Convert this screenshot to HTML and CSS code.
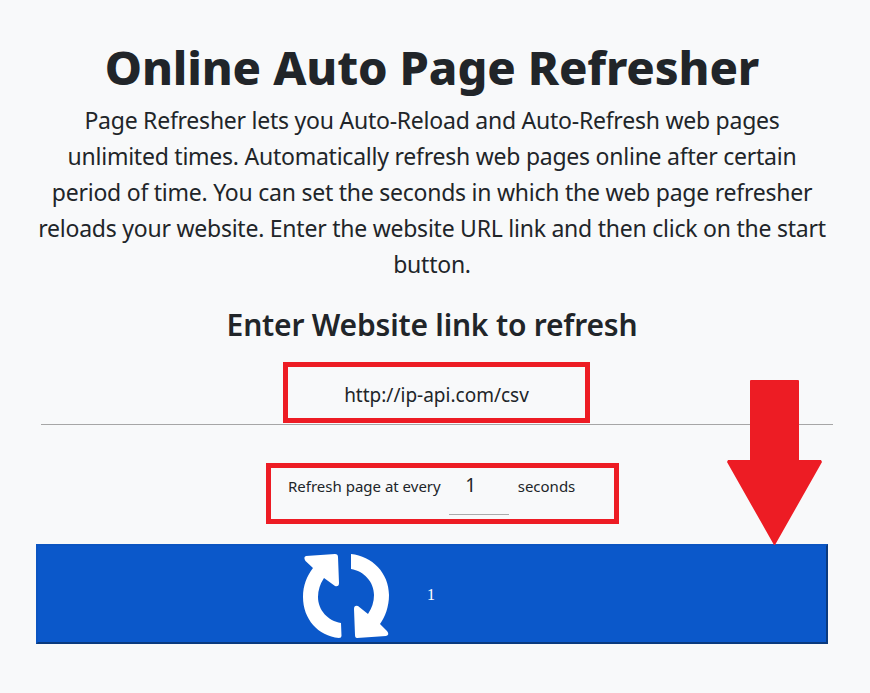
FILE: index.html
```html
<!DOCTYPE html>
<html lang="en">
<head>
    <meta charset="UTF-8">
    <meta name="viewport" content="width=device-width, initial-scale=1.0">
    <title>Online Auto Page Refresher</title>
    <link rel="stylesheet" href="styles.css">
</head>
<body>

    <div class="page">
        <h1>Online Auto Page Refresher</h1>
        <p class="intro">Page Refresher lets you Auto-Reload and Auto-Refresh web pages<br>unlimited times. Automatically refresh web pages online after certain<br>period of time. You can set the seconds in which the web page refresher<br>reloads your website. Enter the website URL link and then click on the start<br>button.</p>
        <h2>Enter Website link to refresh</h2>

        <div class="url-box">http://ip-api.com/csv</div>
        <hr class="divider">

        <div class="timer-box">
            <span class="timer-label">Refresh page at every</span>
            <span class="timer-input">1</span>
            <span class="timer-label">seconds</span>
        </div>

        <div class="start-bar">
            <svg class="refresh-icon" viewBox="23 18 87 87" aria-hidden="true">
                <path d="M26 21 L55 19 Q58 19 58 22 L59 48 Q59 52 55 51 L44 43 Q38 52 38 62 C38 75 48 86 61 88 L61.5 101 Q61.5 103 59 103 C38 101 23 84 23 62 C23 50 27 41 33 33 L25.5 26 Q23 22 26 21Z"/>
                <path d="M71 19 C92 21 109 38 109 60 C109 72 105 82 100 89 L107 96 Q110 100 106 101 L77 103 Q75 103 75 100 L74 74 Q74 70 78 71 L88 79 Q94 70 94 60 C94 47 84 36 71 34Z"/>
            </svg>
            <span class="start-count">1</span>
        </div>

        <svg class="arrow" viewBox="0 0 95 165" aria-hidden="true">
            <path d="M23 1 Q23 0 24 0 L71 0 Q72 0 72 1 L72 80 L94 80 L95 82 L48 165 L47 165 L0 82 L1 80 L23 80Z"/>
        </svg>
    </div>

</body>
</html>
```

FILE: styles.css
```css
body {
    font-family: "Noto Sans", "Open Sans", Arial, sans-serif;
    background: #f8f9fa;
    color: #212529;
    margin: 0;
}
.page {
    position: relative;
    width: 792px;
    height: 693px;
    margin-left: 36px;
    padding-top: 36px;
    box-sizing: border-box;
    display: flex;
    flex-direction: column;
    align-items: center;
}
h1 {
    font-size: 47px;
    line-height: 62px;
    letter-spacing: -0.12px;
    font-weight: 800;
    margin: 0;
}
.intro {
    font-size: 23px;
    line-height: 36px;
    letter-spacing: -0.24px;
    font-weight: 400;
    text-align: center;
    white-space: nowrap;
    margin: 4px 0 0;
}
h2 {
    font-size: 30px;
    line-height: 42px;
    letter-spacing: -0.2px;
    font-weight: 600;
    margin: 22px 0 0;
}
.url-box {
    width: 307px;
    height: 61px;
    margin-top: 16px;
    margin-left: 9px;
    padding-top: 4px;
    box-sizing: border-box;
    border: 5px solid #ed1c24;
    font-size: 19px;
    display: flex;
    align-items: center;
    justify-content: center;
}
.divider {
    align-self: flex-start;
    width: 792px;
    height: 1px;
    margin: 1px 0 0 5px;
    border: 0;
    background: #a6a6a6;
}
.timer-box {
    width: 353px;
    height: 61px;
    margin-top: 38px;
    margin-left: 21px;
    box-sizing: border-box;
    border: 5px solid #ed1c24;
    display: flex;
    align-items: flex-start;
    padding: 8px 0 0 17px;
}
.timer-label {
    font-size: 15px;
    line-height: 21px;
}
.timer-input {
    width: 60px;
    height: 43px;
    margin: -4px 9px 0 8px;
    padding-right: 16px;
    font-size: 19px;
    line-height: 26px;
    text-align: center;
    border-bottom: 1px solid #aaa;
    box-sizing: border-box;
}
.start-bar {
    width: 792px;
    height: 100px;
    margin-top: 20px;
    box-sizing: border-box;
    background: #0b58ca;
    border: 2px solid;
    border-color: #0b55c2 #0a3a7e #0a3a7e #0b55c2;
    display: flex;
    align-items: center;
    padding-left: 265px;
}
.refresh-icon {
    width: 87px;
    height: 87px;
    margin-top: 4px;
    fill: #fff;
    flex: none;
}
.start-count {
    font-family: "Liberation Serif", serif;
    font-size: 16px;
    color: #fff;
    margin: 2px 0 0 37px;
}
.arrow {
    position: absolute;
    left: 691px;
    top: 380px;
    width: 95px;
    height: 165px;
    fill: #ed1c24;
}
```
